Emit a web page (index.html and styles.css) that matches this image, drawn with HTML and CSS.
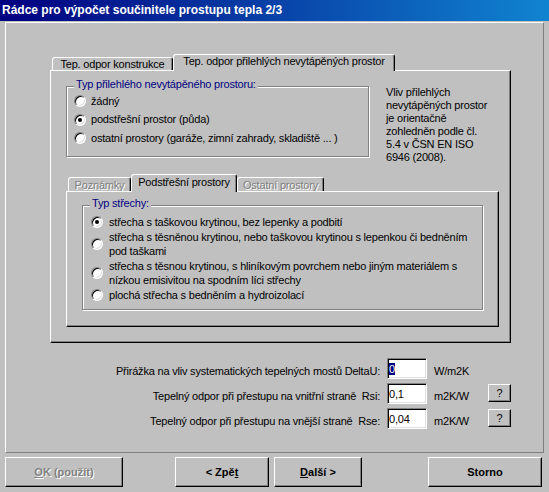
FILE: index.html
```html
<!DOCTYPE html>
<html lang="cs">
<head>
<meta charset="utf-8">
<title>Rádce pro výpočet součinitele prostupu tepla 2/3</title>
<link rel="stylesheet" href="styles.css">
</head>
<body>
<div class="titlebar">Rádce pro výpočet součinitele prostupu tepla 2/3</div>
<div class="frame">
  <div class="tabctl outer">
    <div class="tabstrip">
      <div class="tab t-kon">Tep. odpor konstrukce</div>
      <div class="tab active t-pril">Tep. odpor přilehlých nevytápěných prostor</div>
    </div>
    <div class="tabpanel outer-panel">
      <div class="toprow">
        <div class="group g1">
          <div class="legend">Typ přilehlého nevytápěného prostoru:</div>
          <div class="radios r1">
            <div class="radio"><span class="rb"></span><span>žádný</span></div>
            <div class="radio"><span class="rb on"></span><span>podstřešní prostor (půda)</span></div>
            <div class="radio"><span class="rb"></span><span>ostatní prostory (garáže, zimní zahrady, skladiště ... )</span></div>
          </div>
        </div>
        <div class="note">Vliv přilehlých<br>nevytápěných prostor<br>je orientačně<br>zohledněn podle čl.<br>5.4 v ČSN EN ISO<br>6946 (2008).</div>
      </div>
      <div class="tabctl inner">
        <div class="tabstrip">
          <div class="tab disabled t-pozn">Poznámky</div>
          <div class="tab active t-pod">Podstřešní prostory</div>
          <div class="tab disabled t-ost">Ostatní prostory</div>
        </div>
        <div class="tabpanel inner-panel">
          <div class="group g2">
            <div class="legend">Typ střechy:</div>
            <div class="radios r2">
              <div class="radio"><span class="rb on"></span><span>střecha s taškovou krytinou, bez lepenky a podbití</span></div>
              <div class="radio"><span class="rb"></span><span>střecha s těsněnou krytinou, nebo taškovou krytinou s lepenkou či bedněním<br>pod taškami</span></div>
              <div class="radio"><span class="rb"></span><span>střecha s těsnou krytinou, s hliníkovým povrchem nebo jiným materiálem s<br>nízkou emisivitou na spodním líci střechy</span></div>
              <div class="radio"><span class="rb"></span><span>plochá střecha s bedněním a hydroizolací</span></div>
            </div>
          </div>
        </div>
      </div>
    </div>
  </div>
  <div class="fields">
    <div class="row">
      <div class="label">Přirážka na vliv systematických tepelných mostů DeltaU:</div>
      <div class="input"><span class="sel">0</span></div>
      <div class="unit">W/m2K</div>
    </div>
    <div class="row">
      <div class="label">Tepelný odpor při přestupu na vnitřní straně&nbsp; Rsi:</div>
      <div class="input">0,1</div>
      <div class="unit">m2K/W</div>
      <div class="qbtn">?</div>
    </div>
    <div class="row">
      <div class="label">Tepelný odpor při přestupu na vnější straně&nbsp; Rse:</div>
      <div class="input">0,04</div>
      <div class="unit">m2K/W</div>
      <div class="qbtn">?</div>
    </div>
  </div>
</div>
<div class="buttons">
  <div class="btn b-ok disabled"><span><u>O</u>K (použít)</span></div>
  <div class="btn b-back"><span>&lt; Zpě<u>t</u></span></div>
  <div class="btn b-next"><span><u>D</u>alší &gt;</span></div>
  <div class="btn b-cancel"><span>Storno</span></div>
</div>
</body>
</html>
```
FILE: styles.css
```css
* { box-sizing: border-box; }
html, body { margin: 0; padding: 0; }
body {
  width: 549px;
  height: 492px;
  overflow: hidden;
  background: #c0c0c0;
  color: #000;
  font-family: "Liberation Sans", Arial, sans-serif;
  font-size: 11px;
  line-height: 13px;
  letter-spacing: -0.2px;
}

.titlebar {
  height: 21px;
  line-height: 21px;
  padding-left: 2px;
  background: linear-gradient(to right, #000080, #1084d0);
  color: #fff;
  font-weight: bold;
  font-size: 12px;
  letter-spacing: 0;
  white-space: nowrap;
}

.frame {
  margin: 1px 5px 0 5px;
  height: 431px;
  border: 1px solid;
  border-color: #fff #808080 #808080 #fff;
}

/* tab controls */
.tabctl.outer { margin: 31px 0 0 44px; width: 461px; }
.tabctl.inner { margin: 17px 0 0 15px; width: 433px; }

.tabstrip {
  display: flex;
  align-items: flex-end;
  height: 16px;
  padding-left: 2px;
}
.inner .tabstrip { height: 17px; }

.tab {
  height: 13px;
  border: 1px solid;
  border-bottom: 0;
  border-color: #fff #000 transparent #fff;
  border-radius: 3px 3px 0 0;
  box-shadow: inset -1px 0 #808080;
  text-align: center;
  white-space: nowrap;
  line-height: 13px;
  background: #c0c0c0;
}
.inner .tab { height: 14px; padding-top: 1px; }
.tab.active {
  height: 17px;
  margin-bottom: -1px;
  position: relative;
  z-index: 1;
}
.inner .tab.active { height: 18px; padding-top: 1px; }
.tab.disabled { color: #808080; text-shadow: 1px 1px 0 #fff; }

.t-kon { width: 121px; }
.t-pril { width: 222px; }
.t-pozn { width: 63px; }
.t-pod { width: 106px; }
.t-ost { width: 87px; }

.tabpanel {
  border: 1px solid;
  border-color: #fff #000 #000 #fff;
  box-shadow: inset -1px -1px 0 #808080;
}
.outer-panel { height: 273px; }
.inner-panel { height: 136px; }

.toprow {
  display: flex;
  align-items: flex-start;
  height: 86px;
  padding: 15px 0 0 15px;
}

/* group boxes */
.group {
  border: 1px solid #808080;
  box-shadow: inset 1px 1px 0 #fff, 1px 1px 0 #fff;
}
.g1 { width: 303px; height: 71px; flex: none; }
.g2 { width: 401px; height: 105px; margin: 13px 0 0 15px; }

.legend {
  width: max-content;
  margin: -9px 0 0 7px;
  padding: 0 2px;
  background: #c0c0c0;
  color: #000080;
  line-height: 13px;
}

.radios { display: flex; flex-direction: column; }
.r1 { padding: 1px 0 0 7px; }
.r1 .radio { height: 18.5px; gap: 5px; }
.r2 { padding: 5px 0 0 8px; gap: 1px; line-height: 14px; }
.r2 .radio { gap: 6px; }

.radio {
  display: flex;
  align-items: center;
  white-space: nowrap;
}

.rb {
  flex: none;
  width: 12px;
  height: 12px;
  border-radius: 50%;
  border: 1px solid;
  border-color: #808080 #fff #fff #808080;
  background: #fff;
  box-shadow: inset 1px 1px 0 #000, inset -1px -1px 0 #dfdfdf;
  display: flex;
  align-items: center;
  justify-content: center;
}
.rb.on::after {
  content: "";
  width: 4px;
  height: 4px;
  border-radius: 50%;
  background: #000;
}

.note {
  margin: 0 0 0 17px;
  width: 112px;
  white-space: nowrap;
  line-height: 13px;
}

/* fields */
.fields {
  margin-top: 15px;
  display: flex;
  flex-direction: column;
  gap: 4px;
}
.row {
  display: flex;
  align-items: flex-start;
  height: 21px;
}
.label {
  width: 374px;
  text-align: right;
  white-space: nowrap;
  line-height: 13px;
  padding-top: 7px;
}
.input {
  margin-left: 7px;
  width: 40px;
  height: 21px;
  border: 1px solid;
  border-color: #808080 #fff #fff #808080;
  box-shadow: inset 1px 1px 0 #000, inset -1px -1px 0 #dfdfdf;
  background: #fff;
  padding: 4px 1px 0 1px;
  line-height: 13px;
  white-space: nowrap;
}
.sel { background: #000080; color: #fff; }
.unit {
  margin-left: 7px;
  width: 54px;
  padding-top: 7px;
  white-space: nowrap;
}
.qbtn {
  margin-top: 1px;
  width: 23px;
  height: 18px;
  border: 1px solid;
  border-color: #fff #000 #000 #fff;
  box-shadow: inset -1px -1px 0 #808080;
  display: flex;
  align-items: center;
  justify-content: center;
  line-height: 13px;
}

/* bottom buttons */
.buttons {
  display: flex;
  margin-top: 4px;
  padding-left: 5px;
}
.btn {
  height: 30px;
  border: 1px solid;
  border-color: #fff #000 #000 #fff;
  box-shadow: inset -1px -1px 0 #808080;
  display: flex;
  align-items: center;
  justify-content: center;
  font-weight: bold;
  letter-spacing: 0;
  white-space: nowrap;
}
.btn.disabled { color: #808080; text-shadow: 1px 1px 0 #fff; }
.b-ok { width: 118px; }
.b-back { width: 94px; margin-left: 52px; }
.b-next { width: 88px; margin-left: 5px; }
.b-cancel { width: 114px; margin-left: 66px; }
```
